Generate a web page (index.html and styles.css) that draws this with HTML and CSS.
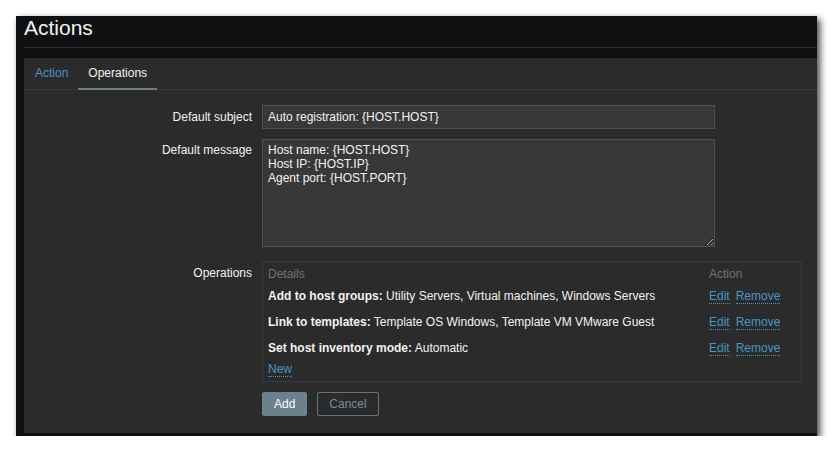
FILE: index.html
```html
<!DOCTYPE html>
<html lang="en">
<head>
<meta charset="utf-8">
<title>Actions</title>
<link rel="stylesheet" href="styles.css">
</head>
<body>
<div class="window">
  <header class="page-head">
    <h1 class="title">Actions</h1>
  </header>
  <main class="panel">
    <ul class="tabs">
      <li class="tab"><a class="tab-link">Action</a></li>
      <li class="tab active"><span class="tab-link">Operations</span></li>
    </ul>
    <form class="form">
      <label class="lbl">Default subject</label>
      <div class="field"><input class="input subject" type="text" value="Auto registration: {HOST.HOST}"></div>

      <label class="lbl lbl-area">Default message</label>
      <div class="field field-area"><textarea class="textarea">Host name: {HOST.HOST}
Host IP: {HOST.IP}
Agent port: {HOST.PORT}</textarea></div>

      <label class="lbl">Operations</label>
      <div class="field">
        <div class="ops">
          <div class="ops-row ops-head">
            <div class="ops-details">Details</div>
            <div class="ops-action">Action</div>
          </div>
          <div class="ops-row">
            <div class="ops-details"><b>Add to host groups:</b> Utility Servers, Virtual machines, Windows Servers</div>
            <div class="ops-action"><a class="link link-edit">Edit</a><a class="link">Remove</a></div>
          </div>
          <div class="ops-row">
            <div class="ops-details"><b>Link to templates:</b> Template OS Windows, Template VM VMware Guest</div>
            <div class="ops-action"><a class="link link-edit">Edit</a><a class="link">Remove</a></div>
          </div>
          <div class="ops-row ops-last">
            <div class="ops-details"><b>Set host inventory mode:</b> Automatic</div>
            <div class="ops-action"><a class="link link-edit">Edit</a><a class="link">Remove</a></div>
          </div>
          <div class="ops-new"><a class="link">New</a></div>
        </div>
      </div>

      <div class="lbl"></div>
      <div class="field buttons">
        <button type="button" class="btn btn-primary">Add</button>
        <button type="button" class="btn btn-alt">Cancel</button>
      </div>
    </form>
  </main>
</div>
</body>
</html>
```
FILE: styles.css
```css
* { box-sizing: border-box; }

html, body {
  margin: 0;
  padding: 0;
  background: #ffffff;
}

body {
  font-family: "Liberation Sans", Arial, sans-serif;
  font-size: 12px;
  line-height: 14px;
  color: #f2f2f2;
}

.window {
  margin: 16px 0 0 16px;
  width: 801px;
  height: 420px;
  background: #0e1012;
  padding: 0 0 3px 8px;
  display: flex;
  flex-direction: column;
  box-shadow: 3px 3px 7px rgba(0, 0, 0, 0.75);
}

.page-head {
  border-bottom: 1px solid #2f3133;
  padding: 0 0 7px 0;
  margin-bottom: 10px;
}

.title {
  margin: 0;
  font-size: 21px;
  line-height: 24px;
  font-weight: normal;
  color: #f2f2f2;
}

.panel {
  flex: 1;
  background: #2b2b2b;
  display: flex;
  flex-direction: column;
}

.tabs {
  list-style: none;
  margin: 0;
  padding: 0 0 0 1px;
  display: flex;
  border-bottom: 1px solid #383838;
  height: 32px;
}

.tab {
  line-height: 30px;
  padding: 0 10px;
  border-bottom: 2px solid transparent;
  margin-bottom: -1px;
}

.tab.active {
  border-bottom-color: #6a7f8a;
}

.tab-link { color: #4796c4; }
.tab.active .tab-link { color: #f2f2f2; }

.form {
  display: grid;
  grid-template-columns: 228px 1fr;
  column-gap: 10px;
  row-gap: 10px;
  padding-top: 15px;
  align-items: start;
}

.lbl {
  text-align: right;
  padding-top: 5px;
  color: #f2f2f2;
}

.lbl-area { padding-top: 4px; }

.field-area { margin-bottom: 4px; }

.input {
  display: block;
  width: 453px;
  height: 24px;
  padding: 0 5px;
  background: #383838;
  border: 1px solid #4f4f4f;
  color: #f2f2f2;
  font-family: "Liberation Sans", Arial, sans-serif;
  font-size: 12px;
  outline: none;
}

.textarea {
  display: block;
  width: 453px;
  height: 108px;
  padding: 3px 5px;
  background: #383838;
  border: 1px solid #4f4f4f;
  color: #f2f2f2;
  font-family: "Liberation Sans", Arial, sans-serif;
  font-size: 12px;
  line-height: 14px;
  resize: both;
  color-scheme: dark;
  outline: none;
  margin: 0;
}

.ops {
  width: 540px;
  border: 1px solid #383838;
  padding: 5px 5px 5px 5px;
}

.ops-row {
  display: flex;
  padding-bottom: 12px;
}

.ops-head {
  color: #737373;
  padding-bottom: 8px;
}

.ops-row.ops-last { padding-bottom: 7px; }

.ops-details { flex: 1; }

.ops-details b { font-weight: bold; }

.ops-action {
  width: 87px;
}

.link {
  color: #4796c4;
  border-bottom: 1px dotted #4796c4;
  cursor: pointer;
}

.link-edit { margin-right: 6px; }

.buttons {
  display: flex;
  gap: 10px;
}

.btn {
  height: 24px;
  padding: 0 11px;
  font-family: "Liberation Sans", Arial, sans-serif;
  font-size: 12px;
  border: 1px solid #6a828e;
  border-radius: 2px;
  cursor: pointer;
}

.btn-primary {
  background: #6a828e;
  color: #ffffff;
}

.btn-alt {
  background: transparent;
  border-color: #5f7784;
  color: #768d99;
}
```
